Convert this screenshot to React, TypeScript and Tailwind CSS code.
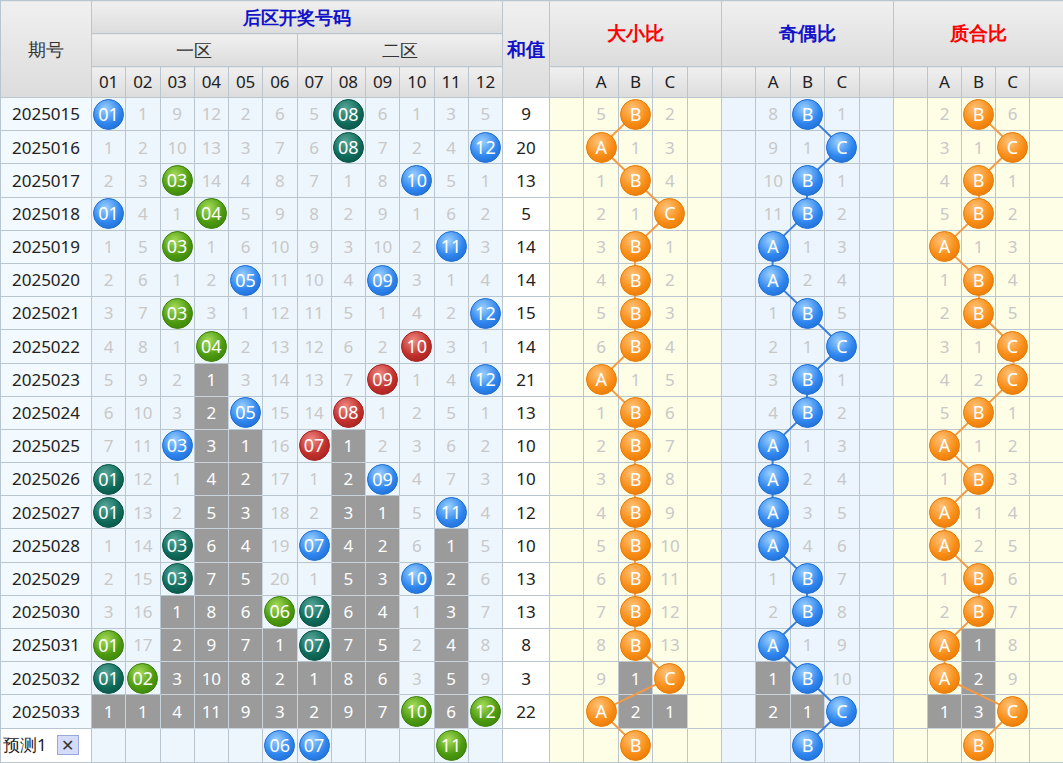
import React from 'react';

type Cell = string | number;
// number cells: "b:01" blue ball, "g:" green, "d:" dark green, "r:" red, "#5" gray block, plain number
const rows: { id: string; nums: Cell[]; sum: number; dx: Cell[]; jo: Cell[]; zh: Cell[] }[] = [
  { id: '2025015', nums: ['b:01', 1, 9, 12, 2, 6, 5, 'd:08', 6, 1, 3, 5], sum: 9, dx: [5, 'B', 2], jo: [8, 'B', 1], zh: [2, 'B', 6] },
  { id: '2025016', nums: [1, 2, 10, 13, 3, 7, 6, 'd:08', 7, 2, 4, 'b:12'], sum: 20, dx: ['A', 1, 3], jo: [9, 1, 'C'], zh: [3, 1, 'C'] },
  { id: '2025017', nums: [2, 3, 'g:03', 14, 4, 8, 7, 1, 8, 'b:10', 5, 1], sum: 13, dx: [1, 'B', 4], jo: [10, 'B', 1], zh: [4, 'B', 1] },
  { id: '2025018', nums: ['b:01', 4, 1, 'g:04', 5, 9, 8, 2, 9, 1, 6, 2], sum: 5, dx: [2, 1, 'C'], jo: [11, 'B', 2], zh: [5, 'B', 2] },
  { id: '2025019', nums: [1, 5, 'g:03', 1, 6, 10, 9, 3, 10, 2, 'b:11', 3], sum: 14, dx: [3, 'B', 1], jo: ['A', 1, 3], zh: ['A', 1, 3] },
  { id: '2025020', nums: [2, 6, 1, 2, 'b:05', 11, 10, 4, 'b:09', 3, 1, 4], sum: 14, dx: [4, 'B', 2], jo: ['A', 2, 4], zh: [1, 'B', 4] },
  { id: '2025021', nums: [3, 7, 'g:03', 3, 1, 12, 11, 5, 1, 4, 2, 'b:12'], sum: 15, dx: [5, 'B', 3], jo: [1, 'B', 5], zh: [2, 'B', 5] },
  { id: '2025022', nums: [4, 8, 1, 'g:04', 2, 13, 12, 6, 2, 'r:10', 3, 1], sum: 14, dx: [6, 'B', 4], jo: [2, 1, 'C'], zh: [3, 1, 'C'] },
  { id: '2025023', nums: [5, 9, 2, '#1', 3, 14, 13, 7, 'r:09', 1, 4, 'b:12'], sum: 21, dx: ['A', 1, 5], jo: [3, 'B', 1], zh: [4, 2, 'C'] },
  { id: '2025024', nums: [6, 10, 3, '#2', 'b:05', 15, 14, 'r:08', 1, 2, 5, 1], sum: 13, dx: [1, 'B', 6], jo: [4, 'B', 2], zh: [5, 'B', 1] },
  { id: '2025025', nums: [7, 11, 'b:03', '#3', '#1', 16, 'r:07', '#1', 2, 3, 6, 2], sum: 10, dx: [2, 'B', 7], jo: ['A', 1, 3], zh: ['A', 1, 2] },
  { id: '2025026', nums: ['d:01', 12, 1, '#4', '#2', 17, 1, '#2', 'b:09', 4, 7, 3], sum: 10, dx: [3, 'B', 8], jo: ['A', 2, 4], zh: [1, 'B', 3] },
  { id: '2025027', nums: ['d:01', 13, 2, '#5', '#3', 18, 2, '#3', '#1', 5, 'b:11', 4], sum: 12, dx: [4, 'B', 9], jo: ['A', 3, 5], zh: ['A', 1, 4] },
  { id: '2025028', nums: [1, 14, 'd:03', '#6', '#4', 19, 'b:07', '#4', '#2', 6, '#1', 5], sum: 10, dx: [5, 'B', 10], jo: ['A', 4, 6], zh: ['A', 2, 5] },
  { id: '2025029', nums: [2, 15, 'd:03', '#7', '#5', 20, 1, '#5', '#3', 'b:10', '#2', 6], sum: 13, dx: [6, 'B', 11], jo: [1, 'B', 7], zh: [1, 'B', 6] },
  { id: '2025030', nums: [3, 16, '#1', '#8', '#6', 'g:06', 'd:07', '#6', '#4', 1, '#3', 7], sum: 13, dx: [7, 'B', 12], jo: [2, 'B', 8], zh: [2, 'B', 7] },
  { id: '2025031', nums: ['g:01', 17, '#2', '#9', '#7', '#1', 'd:07', '#7', '#5', 2, '#4', 8], sum: 8, dx: [8, 'B', 13], jo: ['A', 1, 9], zh: ['A', '#1', 8] },
  { id: '2025032', nums: ['d:01', 'g:02', '#3', '#10', '#8', '#2', '#1', '#8', '#6', 3, '#5', 9], sum: 3, dx: [9, '#1', 'C'], jo: ['#1', 'B', 10], zh: ['A', '#2', 9] },
  { id: '2025033', nums: ['#1', '#1', '#4', '#11', '#9', '#3', '#2', '#9', '#7', 'g:10', '#6', 'g:12'], sum: 22, dx: ['A', '#2', '#1'], jo: ['#2', '#1', 'C'], zh: ['#1', '#3', 'C'] },
];
const predict: Cell[] = ['', '', '', '', '', 'b:06', 'b:07', '', '', '', 'g:11', ''];

const ballCls: Record<string, string> = {
  b: 'bg-[radial-gradient(circle_at_40%_30%,#9cd0ff,#2f86ee_55%,#1a62c8)] border-[#1f6fd0]',
  g: 'bg-[radial-gradient(circle_at_40%_30%,#a6dc5a,#4c9a10_55%,#357a06)] border-[#3c8208]',
  d: 'bg-[radial-gradient(circle_at_40%_30%,#5aa89a,#0f6b5b_55%,#084a3e)] border-[#0a5547]',
  r: 'bg-[radial-gradient(circle_at_40%_30%,#f08a84,#c0302c_55%,#9a1c1a)] border-[#a8231f]',
  o: 'bg-[radial-gradient(circle_at_40%_30%,#ffc37a,#f88d16_55%,#e07000)] border-[#e57d0c]',
};

const Ball = ({ kind, text }: { kind: string; text: string }) => (
  <div className={`relative z-[2] mx-auto flex h-[31px] w-[31px] items-center justify-center rounded-full border text-[18px] text-white ${ballCls[kind]}`}>
    {text}
  </div>
);

const NumCell = ({ v }: { v: Cell }) => {
  if (typeof v === 'string' && v.includes(':')) {
    const [k, t] = v.split(':');
    return <td className="border border-[#b9c6d0] p-0 text-center"><Ball kind={k} text={t} /></td>;
  }
  if (typeof v === 'string' && v.startsWith('#')) {
    return <td className="border border-[#c9d4dc] bg-[#9b9b9b] p-0 text-center text-white">{v.slice(1)}</td>;
  }
  return <td className="border border-[#b9c6d0] p-0 text-center text-[#c8c8c8]">{v}</td>;
};

const RatioCells = ({ vals, kind, bg }: { vals: Cell[]; kind: string; bg: string }) => (
  <>
    <td className={`border border-[#b9c6d0] ${bg}`} />
    {vals.map((v, i) => {
      if (v === 'A' || v === 'B' || v === 'C')
        return <td key={i} className={`border border-[#b9c6d0] p-0 ${bg}`}><Ball kind={kind} text={v} /></td>;
      if (typeof v === 'string' && v.startsWith('#'))
        return <td key={i} className="border border-[#c9d4dc] bg-[#9b9b9b] p-0 text-center text-white">{v.slice(1)}</td>;
      return <td key={i} className={`border border-[#b9c6d0] p-0 text-center text-[#c8c8c8] ${bg}`}>{v}</td>;
    })}
    <td className={`border border-[#b9c6d0] ${bg}`} />
  </>
);

const hdr = 'border border-[#b9c6d0] bg-[linear-gradient(#f0f0f0,#dcdcdc)] p-0 text-center';
const groups = [
  { key: 'dx' as const, title: '大小比', color: 'text-[#ff0000]', kind: 'o', bg: 'bg-[#fefee6]', line: '#f49a45', x: 549 },
  { key: 'jo' as const, title: '奇偶比', color: 'text-[#1212c8]', kind: 'b', bg: 'bg-[#ecf5fd]', line: '#3a7ddb', x: 721 },
  { key: 'zh' as const, title: '质合比', color: 'text-[#ff0000]', kind: 'o', bg: 'bg-[#fefee6]', line: '#f49a45', x: 893 },
];

const ROW0 = 97;
const RH = 33.2;
const CW = 34.4;

export default function App() {
  const lines = groups.map((g) => {
    const pts = rows.map((r, i) => {
      const k = r[g.key].findIndex((v) => v === 'A' || v === 'B' || v === 'C');
      return [g.x + CW * (k + 1) + CW / 2, ROW0 + RH * i + RH / 2];
    });
    pts.push([g.x + CW * 2 + CW / 2, ROW0 + RH * rows.length + RH / 2]);
    return { color: g.line, d: pts.map((p) => p.join(',')).join(' ') };
  });

  return (
    <div className="relative h-[763px] w-[1063px] overflow-hidden bg-white font-['Noto_Sans','Noto_Sans_CJK_SC',sans-serif] text-[17px] text-[#222]">
      <table className="w-[1063px] table-fixed border-collapse">
        <colgroup>
          <col className="w-[91px]" />
          {Array.from({ length: 12 }).map((_, i) => <col key={i} className="w-[34.25px]" />)}
          <col className="w-[47px]" />
          {Array.from({ length: 15 }).map((_, i) => <col key={'r' + i} className={i >= 10 ? 'w-[34px]' : 'w-[34.4px]'} />)}
        </colgroup>
        <thead>
          <tr className="h-[33px]">
            <th rowSpan={3} className={`${hdr} font-normal text-[18px] text-[#333]`}>期号</th>
            <th colSpan={12} className={`${hdr} font-bold text-[18px] text-[#1212c8]`}>后区开奖号码</th>
            <th rowSpan={3} className={`${hdr} font-bold text-[19px] text-[#1212c8]`}>和值</th>
            {groups.map((g) => (
              <th key={g.key} colSpan={5} rowSpan={2} className={`${hdr} font-bold text-[19px] ${g.color}`}>{g.title}</th>
            ))}
          </tr>
          <tr className="h-[33px]">
            <th colSpan={6} className={`${hdr} font-normal text-[18px] text-[#333]`}>一区</th>
            <th colSpan={6} className={`${hdr} font-normal text-[18px] text-[#333]`}>二区</th>
          </tr>
          <tr className="h-[31px]">
            {Array.from({ length: 12 }).map((_, i) => (
              <th key={i} className={`${hdr} font-normal text-[#222]`}>{String(i + 1).padStart(2, '0')}</th>
            ))}
            {groups.map((g) => (
              <React.Fragment key={g.key}>
                <th className={hdr} />
                <th className={`${hdr} font-normal`}>A</th>
                <th className={`${hdr} font-normal`}>B</th>
                <th className={`${hdr} font-normal`}>C</th>
                <th className={hdr} />
              </React.Fragment>
            ))}
          </tr>
        </thead>
        <tbody>
          {rows.map((r) => (
            <tr key={r.id} className="h-[33.2px] bg-[#eef6fd]">
              <td className="border border-[#b9c6d0] bg-[#f2f9ff] p-0 text-center text-[#222]">{r.id}</td>
              {r.nums.map((v, i) => <NumCell key={i} v={v} />)}
              <td className="border border-[#b9c6d0] bg-white p-0 text-center text-[#222]">{r.sum}</td>
              {groups.map((g) => <RatioCells key={g.key} vals={r[g.key]} kind={g.kind} bg={g.bg} />)}
            </tr>
          ))}
          <tr className="h-[34px] bg-[#eef6fd]">
            <td className="border border-[#b9c6d0] bg-white p-0 pl-[2px]">
              <div className="flex items-center gap-[10px]">
                <span>预测1</span>
                <span className="flex h-[20px] w-[22px] items-center justify-center border border-[#9aa8e0] bg-[#d4dcfa] text-[16px] leading-none text-[#333]">✕</span>
              </div>
            </td>
            {predict.map((v, i) => <NumCell key={i} v={v} />)}
            <td className="border border-[#b9c6d0] bg-white" />
            {groups.map((g) => <RatioCells key={g.key} vals={['', 'B', '']} kind={g.kind} bg={g.bg} />)}
          </tr>
        </tbody>
      </table>
      <svg className="pointer-events-none absolute left-0 top-0 z-[1]" width="1063" height="763">
        {lines.map((l, i) => (
          <polyline key={i} points={l.d} fill="none" stroke={l.color} strokeWidth="2" />
        ))}
      </svg>
    </div>
  );
}
